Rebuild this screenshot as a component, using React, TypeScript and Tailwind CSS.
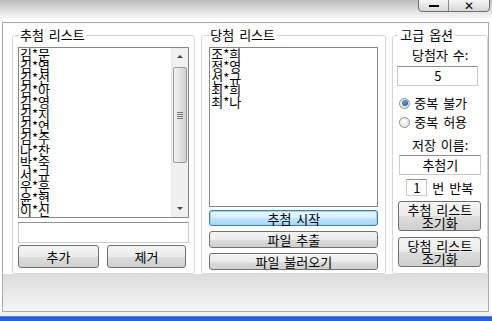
import React from "react";

// ─── Data ─────────────────────────────────────────────────────────────────────
const DRAW_LIST = [
  "김*문",
  "김*엽",
  "김*선",
  "김*아",
  "김*영",
  "김*지",
  "김*연",
  "김*주",
  "나*찬",
  "박*숙",
  "서*규",
  "우*훈",
  "윤*현",
  "이*신",
];

const WIN_LIST = ["조*희", "정*영", "선*규", "최*희", "최*나"];

const FONT = { fontFamily: '"Noto Sans CJK KR", "Noto Sans", sans-serif' };

const BTN =
  "flex items-center justify-center rounded-[3px] border border-[#707070] bg-[linear-gradient(to_bottom,#f4f4f4_0%,#ebebeb_50%,#dddddd_51%,#cfcfcf_100%)] text-[13px] leading-[13px] [word-spacing:2px] text-black";

const BTN_FOCUS =
  "flex items-center justify-center rounded-[3px] border border-[#3c7fb1] shadow-[inset_0_0_0_1px_#9fd4f5] bg-[linear-gradient(to_bottom,#eaf6fd_0%,#d9f0fc_50%,#bee6fd_51%,#a7d9f5_100%)] text-[13px] leading-[13px] [word-spacing:2px] text-black";

const TEXTBOX =
  "flex items-center justify-center border border-[#c9ccd2] border-t-[#8e8f8f] bg-white text-[13px] text-black";

const LABEL = "text-[13px] leading-[14px] [word-spacing:2px]";

function Radio({ checked, label }: { checked?: boolean; label: string }) {
  return (
    <div className="flex items-center h-[14px] ml-[2px] gap-[4px]">
      <span className="flex items-center justify-center w-[11px] h-[11px] rounded-full border border-[#8e8f8f] bg-[radial-gradient(circle_at_40%_35%,#ffffff,#d8d8d8)]">
        {checked && (
          <span className="block w-[6px] h-[6px] rounded-full bg-[radial-gradient(circle_at_40%_35%,#63a3dc,#0d4b8a)]" />
        )}
      </span>
      <span className={LABEL}>{label}</span>
    </div>
  );
}

function Scrollbar() {
  return (
    <div className="flex flex-col w-[17px] h-full bg-[#f0f0f0] border-l border-[#e8e8e8]">
      <div className="flex items-center justify-center h-[17px]">
        <span className="block w-0 h-0 border-x-[3px] border-x-transparent border-b-[3px] border-b-[#444]" />
      </div>
      <div className="mx-[1px] mt-[2px] h-[96px] rounded-[2px] border border-[#9a9a9a] bg-[linear-gradient(to_right,#f4f4f4,#e2e2e2_50%,#d0d0d0)] flex items-center justify-center">
        <div className="flex flex-col gap-[1px]">
          <span className="block w-[6px] h-[1px] bg-[#777]" />
          <span className="block w-[6px] h-[1px] bg-[#777]" />
          <span className="block w-[6px] h-[1px] bg-[#777]" />
          <span className="block w-[6px] h-[1px] bg-[#777]" />
        </div>
      </div>
      <div className="flex-1" />
      <div className="flex items-center justify-center h-[17px]">
        <span className="block w-0 h-0 border-x-[3px] border-x-transparent border-t-[3px] border-t-[#444]" />
      </div>
    </div>
  );
}

export default function App() {
  return (
    <div
      className="w-[492px] h-[321px] overflow-hidden flex flex-col bg-[linear-gradient(to_bottom,#bcbcbc_0px,#ffffff_20px,#ffffff_100%)] text-black"
      style={FONT}
    >
      {/* ── Title strip with window buttons ── */}
      <div className="h-[22px] flex justify-end items-start pr-[2px]">
        <div className="flex h-[13px] -mt-[1px] rounded-b-[4px] border border-[#6f6f6f] bg-[linear-gradient(to_bottom,#f6f6f6,#d6d6d6)] overflow-hidden">
          <div className="w-[30px] flex items-center justify-center border-r border-[#8a8a8a]">
            <span className="block w-[10px] h-[2px] bg-black" />
          </div>
          <div
            className="w-[40px] flex items-center justify-center text-[12px] leading-[12px] font-bold"
            style={{ fontFamily: '"DejaVu Sans", sans-serif' }}
          >
            ✕
          </div>
        </div>
      </div>

      {/* ── Window frame ── */}
      <div className="ml-[2px] w-[487px] h-[290px] border border-[#a8a8a8] flex flex-col bg-white">
        <div className="flex gap-[6px] pl-[9px] pt-[5px] h-[251px]">
          {/* 추첨 리스트 */}
          <fieldset className="w-[184px] h-[246px] rounded-[3px] border border-[#d6d6d6] px-[5px]">
            <legend className={`ml-[1px] px-[1px] ${LABEL}`}>추첨 리스트</legend>
            <div className="mt-[5px] w-[171px] h-[171px] border border-[#828790] flex">
              <div className="flex-1 pl-[1px] text-[13px] leading-[12px]">
                {DRAW_LIST.map((n, i) => (
                  <div key={i} className="h-[12px]">
                    {n}
                  </div>
                ))}
              </div>
              <Scrollbar />
            </div>
            <div className={`${TEXTBOX} mt-[4px] w-[171px] h-[21px]`} />
            <div className="mt-[2px] flex gap-[8px]">
              <button className={`${BTN} w-[81px] h-[23px]`}>추가</button>
              <button className={`${BTN} w-[79px] h-[23px]`}>제거</button>
            </div>
          </fieldset>

          {/* 당첨 리스트 */}
          <fieldset className="w-[184px] h-[246px] rounded-[3px] border border-[#d6d6d6] px-[7px]">
            <legend className={`px-[1px] ${LABEL}`}>당첨 리스트</legend>
            <div className="mt-[5px] w-[169px] h-[160px] border border-[#828790] pl-[1px] text-[13px] leading-[12px]">
              {WIN_LIST.map((n, i) => (
                <div key={i} className="h-[12px]">
                  {n}
                </div>
              ))}
            </div>
            <button className={`${BTN_FOCUS} mt-[3px] w-[169px] h-[16px]`}>추첨 시작</button>
            <button className={`${BTN} mt-[5px] w-[169px] h-[17px]`}>파일 추출</button>
            <button className={`${BTN} mt-[5px] w-[169px] h-[17px]`}>파일 불러오기</button>
          </fieldset>

          {/* 고급 옵션 */}
          <fieldset className="w-[96px] h-[246px] rounded-[3px] border border-[#d6d6d6] px-[4px]">
            <legend className={`ml-[1px] px-[2px] ${LABEL}`}>고급 옵션</legend>
            <div className={`mt-[6px] text-center ${LABEL}`}>당첨자 수:</div>
            <div className={`${TEXTBOX} mt-[4px] w-[81px] h-[20px]`}>5</div>
            <div className="mt-[10px]">
              <Radio checked label="중복 불가" />
            </div>
            <div className="mt-[5px]">
              <Radio label="중복 허용" />
            </div>
            <div className={`mt-[9px] text-center ${LABEL}`}>저장 이름:</div>
            <div className={`${TEXTBOX} mt-[3px] ml-[2px] w-[82px] h-[20px]`}>추첨기</div>
            <div className="mt-[4px] flex items-center gap-[5px] ml-[9px]">
              <div className={`${TEXTBOX} w-[21px] h-[17px]`}>1</div>
              <span className={LABEL}>번 반복</span>
            </div>
            <button className={`${BTN} mt-[5px] ml-[1px] w-[83px] h-[30px] flex-col`}>
              <span>추첨 리스트</span>
              <span>조기화</span>
            </button>
            <button className={`${BTN} mt-[6px] ml-[1px] w-[83px] h-[30px] flex-col`}>
              <span>당첨 리스트</span>
              <span>조기화</span>
            </button>
          </fieldset>
        </div>

        {/* bottom strip */}
        <div className="flex-1 bg-[linear-gradient(to_bottom,#dcdcdc,#f6f6f6)]" />
      </div>

      {/* ── Taskbar edge ── */}
      <div className="h-[4px] bg-[#f2f2f2]" />
      <div className="flex-1 bg-[#2a5fd8] border-t border-[#4a8af0]" />
    </div>
  );
}
